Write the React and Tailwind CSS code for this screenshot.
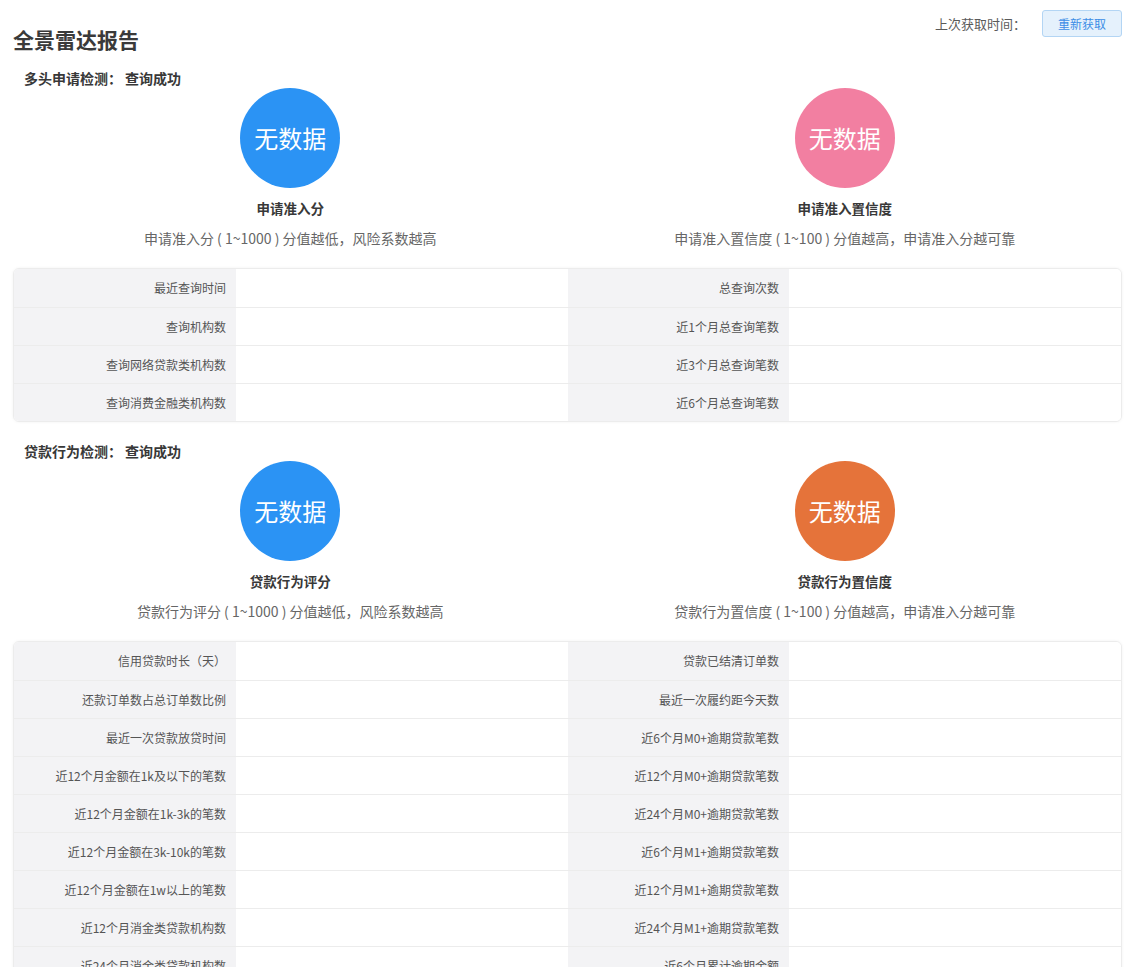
import React from "react";

const sections = [
  {
    label: "多头申请检测：",
    status: "查询成功",
    cards: [
      { color: "bg-[#2b93f4]", title: "申请准入分", desc: "申请准入分 ( 1~1000 ) 分值越低，风险系数越高" },
      { color: "bg-[#f27fa1]", title: "申请准入置信度", desc: "申请准入置信度 ( 1~100 ) 分值越高，申请准入分越可靠" },
    ],
    rows: [
      ["最近查询时间", "总查询次数"],
      ["查询机构数", "近1个月总查询笔数"],
      ["查询网络贷款类机构数", "近3个月总查询笔数"],
      ["查询消费金融类机构数", "近6个月总查询笔数"],
    ],
  },
  {
    label: "贷款行为检测：",
    status: "查询成功",
    cards: [
      { color: "bg-[#2b93f4]", title: "贷款行为评分", desc: "贷款行为评分 ( 1~1000 ) 分值越低，风险系数越高" },
      { color: "bg-[#e5733a]", title: "贷款行为置信度", desc: "贷款行为置信度 ( 1~100 ) 分值越高，申请准入分越可靠" },
    ],
    rows: [
      ["信用贷款时长（天）", "贷款已结清订单数"],
      ["还款订单数占总订单数比例", "最近一次履约距今天数"],
      ["最近一次贷款放贷时间", "近6个月M0+逾期贷款笔数"],
      ["近12个月金额在1k及以下的笔数", "近12个月M0+逾期贷款笔数"],
      ["近12个月金额在1k-3k的笔数", "近24个月M0+逾期贷款笔数"],
      ["近12个月金额在3k-10k的笔数", "近6个月M1+逾期贷款笔数"],
      ["近12个月金额在1w以上的笔数", "近12个月M1+逾期贷款笔数"],
      ["近12个月消金类贷款机构数", "近24个月M1+逾期贷款笔数"],
      ["近24个月消金类贷款机构数", "近6个月累计逾期金额"],
      ["近12个月贷款机构数", "近12个月累计逾期金额"],
    ],
  },
];

function Card({ color, title, desc }) {
  return (
    <div className="flex flex-col items-center">
      <div className={`w-[100px] h-[100px] rounded-full ${color} flex items-center justify-center text-white text-[24px] leading-none`}>
        无数据
      </div>
      <div className="mt-[11px] text-[13.5px] leading-[18px] font-bold text-[#383838]">{title}</div>
      <div className="mt-[11px] text-[14px] leading-[20px] text-[#666]">{desc}</div>
    </div>
  );
}

function Section({ s, first }) {
  return (
    <div>
      <div className={`${first ? "mt-[18px]" : "mt-[20px]"} pl-[11px] text-[14px] leading-[18px] font-bold text-[#383838]`}>
        {s.label}
        <span className="ml-[3px]">{s.status}</span>
      </div>
      <div className="mt-[1px] grid grid-cols-2">
        {s.cards.map((c) => (
          <Card key={c.title} {...c} />
        ))}
      </div>
      <div className="mt-[20px] border border-[#ececec] rounded-[6px] overflow-hidden shadow-[0_0_3px_rgba(0,0,0,0.06)]">
        {s.rows.map((r, i) => (
          <div
            key={i}
            className={`grid grid-cols-[222px_1fr_221px_1fr] h-[38px] ${i > 0 ? "border-t border-[#ececec]" : ""}`}
          >
            <div className="bg-[#f3f3f5] flex items-center justify-end pr-[10px] text-[12px] text-[#555]">{r[0]}</div>
            <div className="bg-white" />
            <div className="bg-[#f3f3f5] flex items-center justify-end pr-[10px] text-[12px] text-[#555]">{r[1]}</div>
            <div className="bg-white" />
          </div>
        ))}
      </div>
    </div>
  );
}

export default function App() {
  return (
    <div className="min-h-screen bg-white font-['Noto_Sans_CJK_SC','Noto_Sans',sans-serif] pl-[13px] pr-[12px]">
      <div className="flex justify-between items-start">
        <div className="pt-[27px] text-[21px] leading-[24px] font-bold text-[#3a3a3a]">全景雷达报告</div>
        <div className="pt-[10px] flex items-center">
          <span className="text-[13px] text-[#5a5a5a]">上次获取时间：</span>
          <button className="ml-[16px] w-[80px] h-[27px] rounded-[3px] bg-[#e5f1fc] border border-[#b3d5f4] text-[12px] text-[#3b8de6]">
            重新获取
          </button>
        </div>
      </div>
      {sections.map((s, i) => (
        <Section key={i} s={s} first={i === 0} />
      ))}
    </div>
  );
}
